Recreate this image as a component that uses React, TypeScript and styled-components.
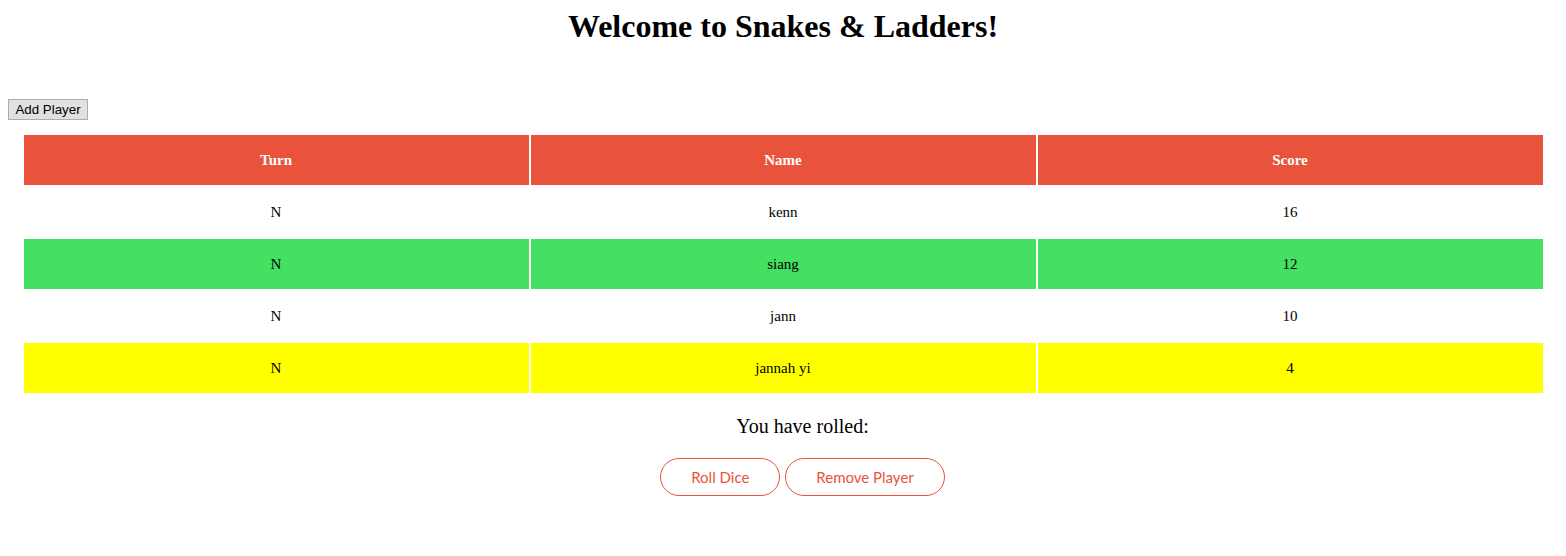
import React from "react";
import styled, { createGlobalStyle } from "styled-components";

const GlobalStyle = createGlobalStyle`
  html, body { margin: 0; padding: 0; background: #ffffff; }
  body {
    margin: 8px;
    font-family: "Liberation Serif", "Times New Roman", serif;
    color: #000;
  }
`;

const Page = styled.div`
  display: flex;
  flex-direction: column;
`;

const Title = styled.h1`
  margin: 0;
  font-size: 32px;
  line-height: 37px;
  font-weight: bold;
  text-align: center;
`;

const FormRow = styled.div`
  display: flex;
  align-items: center;
  gap: 4px;
  margin-top: 54px;
  margin-left: -8px;
  height: 21px;
`;

const NameInput = styled.input`
  box-sizing: border-box;
  flex: 0 0 auto;
  width: 4px;
  min-width: 0;
  height: 21px;
  border: 1px solid #8f8f8f;
  border-left: none;
  background: #ffffff;
  padding: 0;
  font: 13.33px "Liberation Sans", Arial, sans-serif;
`;

const AddButton = styled.button`
  box-sizing: border-box;
  flex: 0 0 auto;
  width: 80px;
  height: 21px;
  padding: 0 6px;
  border: 1px solid #adadad;
  background: #e1e1e1;
  border-radius: 0;
  font: 13.33px "Liberation Sans", Arial, sans-serif;
  color: #000;
`;

const Table = styled.table`
  border-collapse: separate;
  border-spacing: 2px;
  width: 1523px;
  margin: 13px auto 0;
  table-layout: fixed;
`;

const HeadCell = styled.th`
  height: 50px;
  padding: 0;
  background: #e9533b;
  color: #ffffff;
  font-size: 15px;
  font-weight: bold;
  text-align: center;
`;

const Row = styled.tr<{ $bg: string }>`
  background: ${(p) => p.$bg};
`;

const Cell = styled.td`
  height: 50px;
  padding: 0;
  font-size: 15px;
  text-align: center;
`;

const Footer = styled.div`
  display: flex;
  flex-direction: column;
  align-items: center;
  padding-left: 39px;
`;

const Rolled = styled.p`
  margin: 20px 0 0;
  font-size: 20px;
  line-height: 23px;
  text-align: center;
`;

const Actions = styled.div`
  display: flex;
  justify-content: center;
  gap: 5px;
  margin-top: 20px;
`;

const PillButton = styled.button`
  box-sizing: border-box;
  height: 38px;
  padding: 0 30px;
  border: 1px solid #e9533b;
  border-radius: 19px;
  background: #ffffff;
  color: #e9533b;
  font: 15px Lato, "Open Sans", sans-serif;
`;

const players = [
  { turn: "N", name: "kenn", score: 16, bg: "#ffffff" },
  { turn: "N", name: "siang", score: 12, bg: "#44e061" },
  { turn: "N", name: "jann", score: 10, bg: "#ffffff" },
  { turn: "N", name: "jannah yi", score: 4, bg: "#ffff00" },
];

export default function App() {
  return (
    <>
      <GlobalStyle />
      <Page>
        <Title>Welcome to Snakes &amp; Ladders!</Title>
        <FormRow>
          <NameInput type="text" aria-label="Player name" />
          <AddButton>Add Player</AddButton>
        </FormRow>
        <Table>
          <thead>
            <tr>
              <HeadCell>Turn</HeadCell>
              <HeadCell>Name</HeadCell>
              <HeadCell>Score</HeadCell>
            </tr>
          </thead>
          <tbody>
            {players.map((p) => (
              <Row key={p.name} $bg={p.bg}>
                <Cell>{p.turn}</Cell>
                <Cell>{p.name}</Cell>
                <Cell>{p.score}</Cell>
              </Row>
            ))}
          </tbody>
        </Table>
        <Footer>
          <Rolled>You have rolled:</Rolled>
          <Actions>
            <PillButton>Roll Dice</PillButton>
            <PillButton>Remove Player</PillButton>
          </Actions>
        </Footer>
      </Page>
    </>
  );
}
